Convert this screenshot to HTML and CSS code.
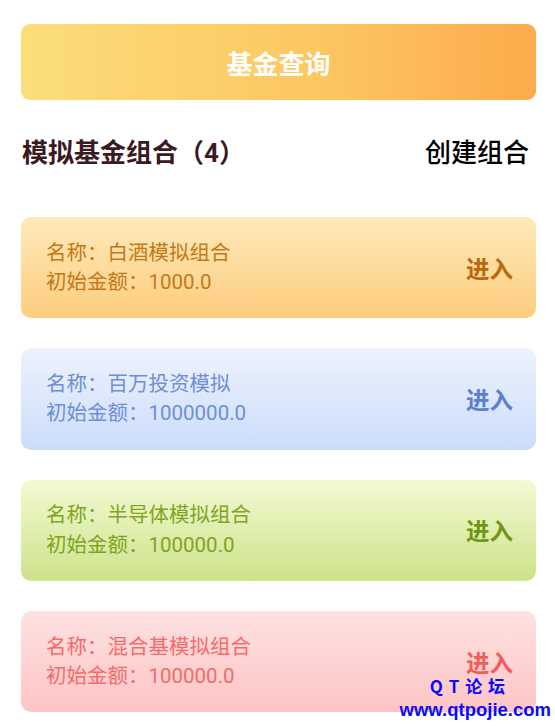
FILE: index.html
```html
<!DOCTYPE html>
<html lang="zh-CN">
<head>
<meta charset="utf-8">
<title>模拟基金组合</title>
<link rel="stylesheet" href="styles.css">
</head>
<body>
<div class="page">
  <div class="query-btn">基金查询</div>
  <div class="header">
    <div class="title">模拟基金组合（4）</div>
    <div class="create">创建组合</div>
  </div>
  <div class="list">
    <div class="card card-orange">
      <div class="info">
        <div class="line">名称：白酒模拟组合</div>
        <div class="line">初始金额：1000.0</div>
      </div>
      <div class="enter">进入</div>
    </div>
    <div class="card card-blue">
      <div class="info">
        <div class="line">名称：百万投资模拟</div>
        <div class="line">初始金额：1000000.0</div>
      </div>
      <div class="enter">进入</div>
    </div>
    <div class="card card-green">
      <div class="info">
        <div class="line">名称：半导体模拟组合</div>
        <div class="line">初始金额：100000.0</div>
      </div>
      <div class="enter">进入</div>
    </div>
    <div class="card card-red">
      <div class="info">
        <div class="line">名称：混合基模拟组合</div>
        <div class="line">初始金额：100000.0</div>
      </div>
      <div class="enter">进入</div>
    </div>
  </div>
  <div class="watermark">
    <div class="wm-top">Q T 论 坛</div>
    <div class="wm-url">www.qtpojie.com</div>
  </div>
</div>
</body>
</html>
```
FILE: styles.css
```css
html, body {
  margin: 0;
  padding: 0;
  background: #ffffff;
}
body {
  font-family: Roboto, "Noto Sans CJK SC", sans-serif;
}
.page {
  position: relative;
  width: 555px;
  height: 726px;
  padding: 24px 19px 0 21px;
  box-sizing: border-box;
  overflow: hidden;
}
.query-btn {
  height: 76px;
  border-radius: 9px;
  background: linear-gradient(to right, #fbde7b 0%, #fcc862 55%, #fdab4d 100%);
  color: #ffffff;
  font-size: 26px;
  font-weight: 700;
  display: flex;
  align-items: center;
  justify-content: center;
}
.header {
  margin-top: 32px;
  height: 36px;
  display: flex;
  align-items: center;
  justify-content: space-between;
  padding: 0 7px 0 1px;
}
.title {
  font-size: 26px;
  font-weight: 700;
  color: #3b1a1f;
}
.create {
  font-size: 26px;
  font-weight: 500;
  color: #000000;
}
.list {
  margin-top: 49px;
  display: flex;
  flex-direction: column;
  gap: 30px;
}
.card {
  height: 101.3px;
  border-radius: 10px;
  display: flex;
  align-items: center;
  justify-content: space-between;
  padding: 0 23px 0 25px;
}
.info {
  display: flex;
  flex-direction: column;
  margin-top: 1px;
}
.line {
  font-size: 20.5px;
  line-height: 29.5px;
}
.enter {
  font-size: 23.5px;
  font-weight: 700;
}
.card-orange {
  background: linear-gradient(to bottom, #feeabb, #fdcd7d);
  color: #c47818;
}
.card-orange .enter { color: #b9680c; }
.card-blue {
  background: linear-gradient(to bottom, #eef3fd, #cbdcfb);
  color: #6e8fd4;
}
.card-blue .enter { color: #5b80cd; }
.card-green {
  background: linear-gradient(to bottom, #f3fad4, #cde28a);
  color: #7fa51d;
}
.card-green .enter { color: #6f9812; }
.card-red {
  background: linear-gradient(to bottom, #fee2e2, #fec4c4);
  color: #f36b6b;
}
.card-red .enter { color: #f25c5c; }
.watermark {
  position: absolute;
  right: 4px;
  bottom: 5px;
  display: flex;
  flex-direction: column;
  align-items: flex-end;
  color: #0a0aff;
  font-weight: 700;
}
.wm-top {
  font-family: "Noto Sans CJK SC", sans-serif;
  font-size: 17px;
  line-height: 22px;
  margin-right: 45px;
  margin-bottom: 1px;
  letter-spacing: 1px;
}
.wm-url {
  font-family: "Liberation Sans", sans-serif;
  font-size: 18.5px;
  line-height: 23px;
}
```
